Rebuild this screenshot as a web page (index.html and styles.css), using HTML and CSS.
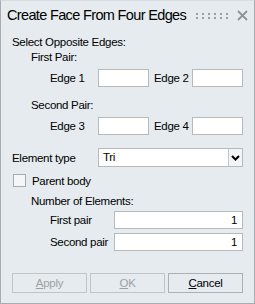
FILE: index.html
```html
<!DOCTYPE html>
<html lang="en">
<head>
    <meta charset="UTF-8">
    <title>Create Face From Four Edges</title>
    <link rel="stylesheet" href="styles.css">
</head>
<body>
    <div class="dialog">
        <div class="titlebar">
            <span class="title">Create Face From Four Edges</span>
            <svg class="grip" width="34" height="6" viewBox="0 0 34 6">
                <g fill="#9a9ea3">
                    <rect x="0" y="0" width="2" height="2"/><rect x="6" y="0" width="2" height="2"/>
                    <rect x="12" y="0" width="2" height="2"/><rect x="18" y="0" width="2" height="2"/>
                    <rect x="24" y="0" width="2" height="2"/><rect x="30" y="0" width="2" height="2"/>
                    <rect x="0" y="4" width="2" height="2"/><rect x="6" y="4" width="2" height="2"/>
                    <rect x="12" y="4" width="2" height="2"/><rect x="18" y="4" width="2" height="2"/>
                    <rect x="24" y="4" width="2" height="2"/><rect x="30" y="4" width="2" height="2"/>
                </g>
            </svg>
            <svg class="close" width="11" height="11" viewBox="0 0 11 11">
                <path d="M1 1 L10 10 M10 1 L1 10" stroke="#8f9398" stroke-width="1.8"/>
            </svg>
        </div>
        <div class="content">
            <div class="label sel">Select Opposite Edges:</div>
            <div class="label ind1">First Pair:</div>
            <div class="edge-row first">
                <span class="edge-label">Edge 1</span>
                <span class="box"></span>
                <span class="edge-label2">Edge 2</span>
                <span class="box"></span>
            </div>
            <div class="label ind1 second-pair">Second Pair:</div>
            <div class="edge-row">
                <span class="edge-label">Edge 3</span>
                <span class="box"></span>
                <span class="edge-label2">Edge 4</span>
                <span class="box"></span>
            </div>
            <div class="type-row">
                <span class="type-label">Element type</span>
                <div class="select">
                    <span class="select-val">Tri</span>
                    <span class="select-btn">
                        <svg width="9" height="6" viewBox="0 0 9 6">
                            <path d="M1 1 L4.5 4.5 L8 1" stroke="#000" stroke-width="2" fill="none"/>
                        </svg>
                    </span>
                </div>
            </div>
            <div class="check-row">
                <span class="checkbox"></span>
                <span>Parent body</span>
            </div>
            <div class="label ind1 num">Number of Elements:</div>
            <div class="num-row">
                <span class="num-label">First pair</span>
                <span class="num-box">1</span>
            </div>
            <div class="num-row second">
                <span class="num-label">Second pair</span>
                <span class="num-box">1</span>
            </div>
        </div>
        <div class="buttons">
            <button class="btn disabled"><u>A</u>pply</button>
            <button class="btn disabled"><u>O</u>K</button>
            <button class="btn"><u>C</u>ancel</button>
        </div>
    </div>
</body>
</html>
```

FILE: styles.css
```css
* {
    margin: 0;
    padding: 0;
    box-sizing: border-box;
}
body {
    background-color: #e5ebef;
    font-family: "Liberation Sans", Arial, sans-serif;
    font-size: 11.5px;
    letter-spacing: -0.3px;
    color: #000;
    white-space: nowrap;
}
.dialog {
    width: 255px;
    height: 304px;
    border: 1px solid #a7acb1;
    border-top-color: #d6dce0;
    background-color: #e5ebef;
}
.titlebar {
    height: 29px;
    display: flex;
    align-items: center;
    padding-left: 6px;
}
.title {
    font-size: 14.5px;
    letter-spacing: -0.65px;
    line-height: 29px;
    flex: 1;
}
.grip {
    margin-right: 7px;
    margin-top: 1px;
    flex-shrink: 0;
}
.close {
    margin-right: 6px;
    flex-shrink: 0;
}
.content {
    padding-left: 11px;
}
.label {
    line-height: 15px;
    height: 15px;
}
.sel {
    margin-top: 5px;
}
.ind1 {
    padding-left: 19px;
}
.edge-row {
    display: flex;
    align-items: center;
    height: 18px;
    margin-top: 4px;
}
.edge-label {
    width: 86px;
    padding-left: 38px;
    flex-shrink: 0;
}
.edge-label2 {
    width: 43px;
    padding-left: 5px;
    flex-shrink: 0;
}
.box {
    width: 51px;
    height: 18px;
    background: #fff;
    border: 1px solid #b7babd;
    flex-shrink: 0;
}
.second-pair {
    margin-top: 11px;
}
.edge-row + .type-row {
    margin-top: 13px;
}
.type-row {
    display: flex;
    align-items: center;
    height: 19px;
}
.type-label {
    width: 86px;
    flex-shrink: 0;
}
.select {
    display: flex;
    width: 145px;
    height: 19px;
    background: #fff;
    border: 1px solid #b7babd;
    flex-shrink: 0;
}
.select-val {
    flex: 1;
    padding-left: 4px;
    line-height: 17px;
}
.select-btn {
    width: 14px;
    border-left: 1px solid #c4c7ca;
    background: #f2f4f6;
    display: flex;
    align-items: center;
    justify-content: center;
}
.check-row {
    display: flex;
    align-items: center;
    height: 15px;
    margin-top: 6px;
}
.checkbox {
    width: 13px;
    height: 13px;
    border: 1px solid #a7abaf;
    background: #f4f6f7;
    margin-left: 1px;
    margin-right: 6px;
    flex-shrink: 0;
}
.num {
    margin-top: 6px;
}
.num-row {
    display: flex;
    align-items: center;
    height: 18px;
    margin-top: 2px;
}
.num-row.second {
    margin-top: 4px;
}
.num-label {
    width: 102px;
    padding-left: 38px;
    flex-shrink: 0;
}
.num-box {
    width: 129px;
    height: 18px;
    background: #fff;
    border: 1px solid #b7babd;
    text-align: right;
    padding-right: 5px;
    line-height: 16px;
    flex-shrink: 0;
}
.buttons {
    display: flex;
    gap: 3px;
    padding-left: 11px;
    margin-top: 22px;
}
.btn {
    width: 75px;
    height: 20px;
    font-family: inherit;
    font-size: 11.5px;
    letter-spacing: -0.3px;
    background: #e5ebef;
    border: 1px solid #adb0b3;
    color: #000;
}
.btn.disabled {
    color: #9ea1a4;
    border-color: #c2c5c8;
}
```
